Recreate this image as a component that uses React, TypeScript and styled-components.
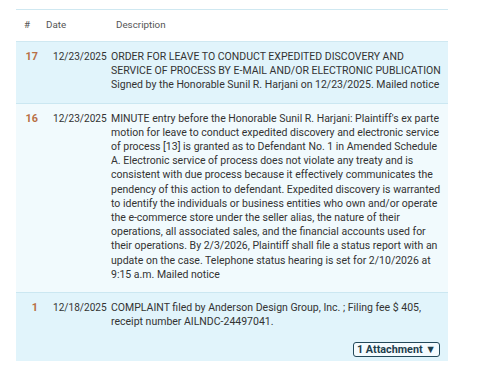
import styled, { createGlobalStyle } from 'styled-components';

const GlobalStyle = createGlobalStyle`
  html, body {
    margin: 0;
    padding: 0;
    background: #ffffff;
  }
  body {
    font-family: Roboto, 'Liberation Sans', sans-serif;
  }
`;

type Entry = {
  num: number;
  date: string;
  lines: string[];
  attachments?: number;
  shade: 'blue' | 'pale';
};

// lines follow the docket's own wrapping
const entries: Entry[] = [
  {
    num: 17,
    date: '12/23/2025',
    lines: [
      'ORDER FOR LEAVE TO CONDUCT EXPEDITED DISCOVERY AND',
      'SERVICE OF PROCESS BY E-MAIL AND/OR ELECTRONIC PUBLICATION',
      'Signed by the Honorable Sunil R. Harjani on 12/23/2025. Mailed notice',
    ],
    shade: 'blue',
  },
  {
    num: 16,
    date: '12/23/2025',
    lines: [
      "MINUTE entry before the Honorable Sunil R. Harjani: Plaintiff's ex parte",
      'motion for leave to conduct expedited discovery and electronic service',
      'of process [13] is granted as to Defendant No. 1 in Amended Schedule',
      'A. Electronic service of process does not violate any treaty and is',
      'consistent with due process because it effectively communicates the',
      'pendency of this action to defendant. Expedited discovery is warranted',
      'to identify the individuals or business entities who own and/or operate',
      'the e-commerce store under the seller alias, the nature of their',
      'operations, all associated sales, and the financial accounts used for',
      'their operations. By 2/3/2026, Plaintiff shall file a status report with an',
      'update on the case. Telephone status hearing is set for 2/10/2026 at',
      '9:15 a.m. Mailed notice',
    ],
    shade: 'pale',
  },
  {
    num: 1,
    date: '12/18/2025',
    lines: [
      'COMPLAINT filed by Anderson Design Group, Inc. ; Filing fee $ 405,',
      'receipt number AILNDC-24497041.',
    ],
    attachments: 1,
    shade: 'blue',
  },
];

export default function App() {
  return (
    <>
      <GlobalStyle />
      <Page>
        <Docket>
          <HeadRow>
            <HeadCell>#</HeadCell>
            <HeadCell>Date</HeadCell>
            <HeadCell>Description</HeadCell>
          </HeadRow>
          {entries.map((e) => (
            <Row key={e.num} $shade={e.shade}>
              <Num>{e.num}</Num>
              <DateCell>{e.date}</DateCell>
              <Desc>
                {e.lines.map((l, i) => (
                  <Line key={i}>{l}</Line>
                ))}
                {e.attachments ? (
                  <AttachBar>
                    <AttachButton>{e.attachments} Attachment ▼</AttachButton>
                  </AttachBar>
                ) : null}
              </Desc>
            </Row>
          ))}
        </Docket>
      </Page>
    </>
  );
}

const Page = styled.div`
  padding: 9px 42px 14px 16px;
`;

const Docket = styled.div`
  border-top: 1px solid #cfe8f1;
  font-size: 10.5px;
  line-height: 14.2px;
  color: #333333;
`;

const HeadRow = styled.div`
  display: grid;
  grid-template-columns: 22px 70px 1fr;
  align-items: center;
  height: 31px;
  padding-left: 8px;
  border-bottom: 1px solid #cfe8f1;
  color: #555555;
  font-size: 9.8px;
`;

const HeadCell = styled.div``;

const Row = styled.div<{ $shade: 'blue' | 'pale' }>`
  display: grid;
  grid-template-columns: 22px 58px 1fr;
  padding: 8px 8px 10px 0;
  background: ${({ $shade }) => ($shade === 'blue' ? '#e1f4fb' : '#f1fafd')};
  border-top: 1px solid #cbe7f1;
  &:nth-child(2) {
    border-top: none;
  }
`;

const Num = styled.div`
  text-align: right;
  font-weight: 700;
  font-size: 10.8px;
  color: #b86f45;
`;

const DateCell = styled.div`
  padding-left: 15px;
  margin-right: -15px;
  white-space: nowrap;
  font-size: 10.1px;
`;

const Desc = styled.div`
  padding-left: 15px;
  min-width: 0;
`;

const Line = styled.div`
  white-space: nowrap;
`;

const AttachBar = styled.div`
  display: flex;
  justify-content: flex-end;
  margin: 13px 0 -6px;
`;

const AttachButton = styled.span`
  display: inline-block;
  padding: 0 3px;
  border: 1px solid #23495a;
  border-radius: 3px;
  background: #f4fbfe;
  font-weight: 700;
  font-size: 10.8px;
  line-height: 13px;
  color: #1f3f4d;
`;
